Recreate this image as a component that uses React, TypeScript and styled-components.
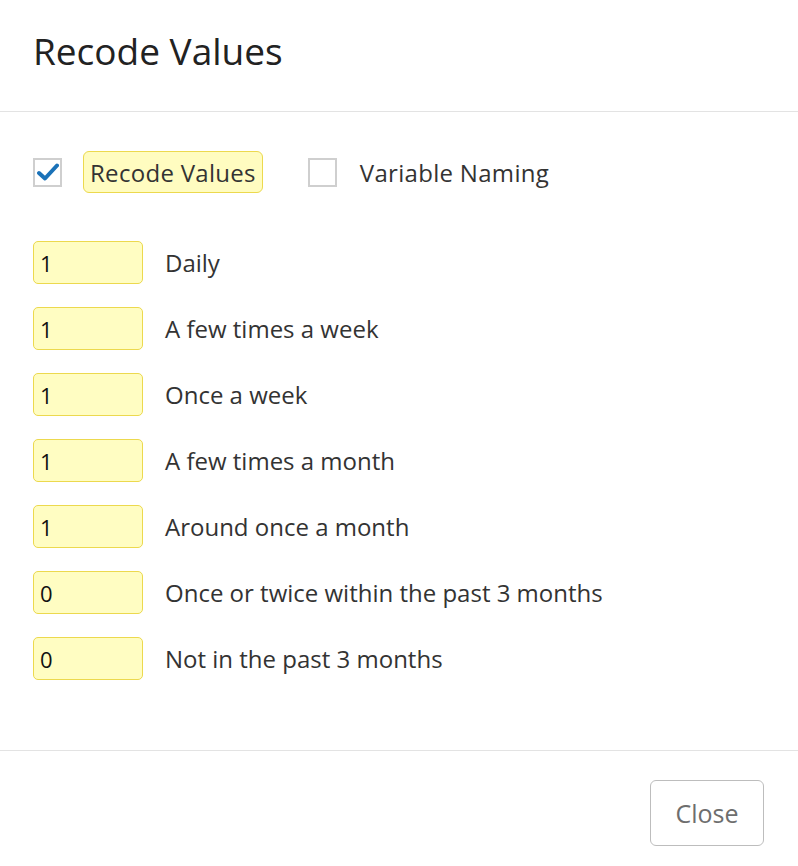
import styled, { createGlobalStyle } from 'styled-components'

const GlobalStyle = createGlobalStyle`
    body {
        margin: 0;
        background: #ffffff;
        font-family: "Open Sans", "Noto Sans", sans-serif;
        color: #2b2b2b;
    }
`

const Dialog = styled.div`
    width: 798px;
    height: 866px;
    display: flex;
    flex-direction: column;
    background: #ffffff;
`

const Header = styled.header`
    height: 112px;
    box-sizing: border-box;
    padding: 0 34px 10px 33px;
    display: flex;
    align-items: center;
    border-bottom: 1px solid #e3e3e3;

    & h1 {
        margin: 0;
        font-size: 37px;
        font-weight: 400;
        color: #222222;
        letter-spacing: 0;
    }
`

const Body = styled.main`
    flex: 1;
    padding: 39px 34px 0 33px;
    border-bottom: 1px solid #e3e3e3;
`

const OptionsRow = styled.div`
    display: flex;
    align-items: center;
    height: 42px;
    margin-bottom: 48px;
`

const Option = styled.label<{ $gap: number }>`
    display: flex;
    align-items: center;
    gap: ${p => p.$gap}px;
    margin-right: 45px;
    font-size: 24px;
    color: #333333;
`

const Box = styled.span`
    width: 25px;
    height: 25px;
    border: 2px solid #cfcfcf;
    display: flex;
    align-items: center;
    justify-content: center;
    background: #ffffff;
`

const Highlight = styled.span<{ $on?: boolean }>`
    padding: 0 6px;
    height: 42px;
    display: flex;
    align-items: center;
    border-radius: 6px;
    background: ${p => (p.$on ? '#fffcc0' : 'transparent')};
    border: 1px solid ${p => (p.$on ? '#ecd94e' : 'transparent')};
    box-sizing: border-box;
    letter-spacing: 0.3px;
`

const List = styled.div`
    display: flex;
    flex-direction: column;
    gap: 23px;
`

const Row = styled.div`
    display: flex;
    align-items: center;
    gap: 22px;
`

const ValueInput = styled.input`
    width: 110px;
    height: 43px;
    box-sizing: border-box;
    border: 1px solid #ecd94e;
    border-radius: 5px;
    background: #fffdc2;
    font-family: "Open Sans", "Noto Sans", sans-serif;
    font-size: 22px;
    color: #111111;
    padding: 0 6px;
    outline: none;
`

const RowLabel = styled.span`
    font-size: 24px;
    color: #333333;
`

const Footer = styled.footer`
    height: 115px;
    display: flex;
    justify-content: flex-end;
    align-items: flex-start;
    padding: 29px 34px 0 0;
    box-sizing: border-box;
`

const CloseButton = styled.button`
    width: 114px;
    height: 66px;
    border: 1px solid #bdbdbd;
    border-radius: 6px;
    background: #ffffff;
    font-family: "Open Sans", "Noto Sans", sans-serif;
    font-size: 25px;
    color: #6e6e6e;
`

const rows = [
    { value: '1', label: 'Daily' },
    { value: '1', label: 'A few times a week' },
    { value: '1', label: 'Once a week' },
    { value: '1', label: 'A few times a month' },
    { value: '1', label: 'Around once a month' },
    { value: '0', label: 'Once or twice within the past 3 months' },
    { value: '0', label: 'Not in the past 3 months' },
]

const Check = () => (
    <svg width="22" height="18" viewBox="0 0 22 18">
        <path d="M2 10 L8 15.5 L20 2.5" fill="none" stroke="#1a72b8" strokeWidth="4" strokeLinecap="round" strokeLinejoin="round" />
    </svg>
)

export default function App() {
    return (
        <>
            <GlobalStyle />
            <Dialog>
                <Header><h1>Recode Values</h1></Header>
                <Body>
                    <OptionsRow>
                        <Option $gap={21}>
                            <Box><Check /></Box>
                            <Highlight $on>Recode Values</Highlight>
                        </Option>
                        <Option $gap={16}>
                            <Box />
                            <Highlight>Variable Naming</Highlight>
                        </Option>
                    </OptionsRow>
                    <List>
                        {rows.map((r, i) => (
                            <Row key={i}>
                                <ValueInput defaultValue={r.value} />
                                <RowLabel>{r.label}</RowLabel>
                            </Row>
                        ))}
                    </List>
                </Body>
                <Footer>
                    <CloseButton>Close</CloseButton>
                </Footer>
            </Dialog>
        </>
    )
}
